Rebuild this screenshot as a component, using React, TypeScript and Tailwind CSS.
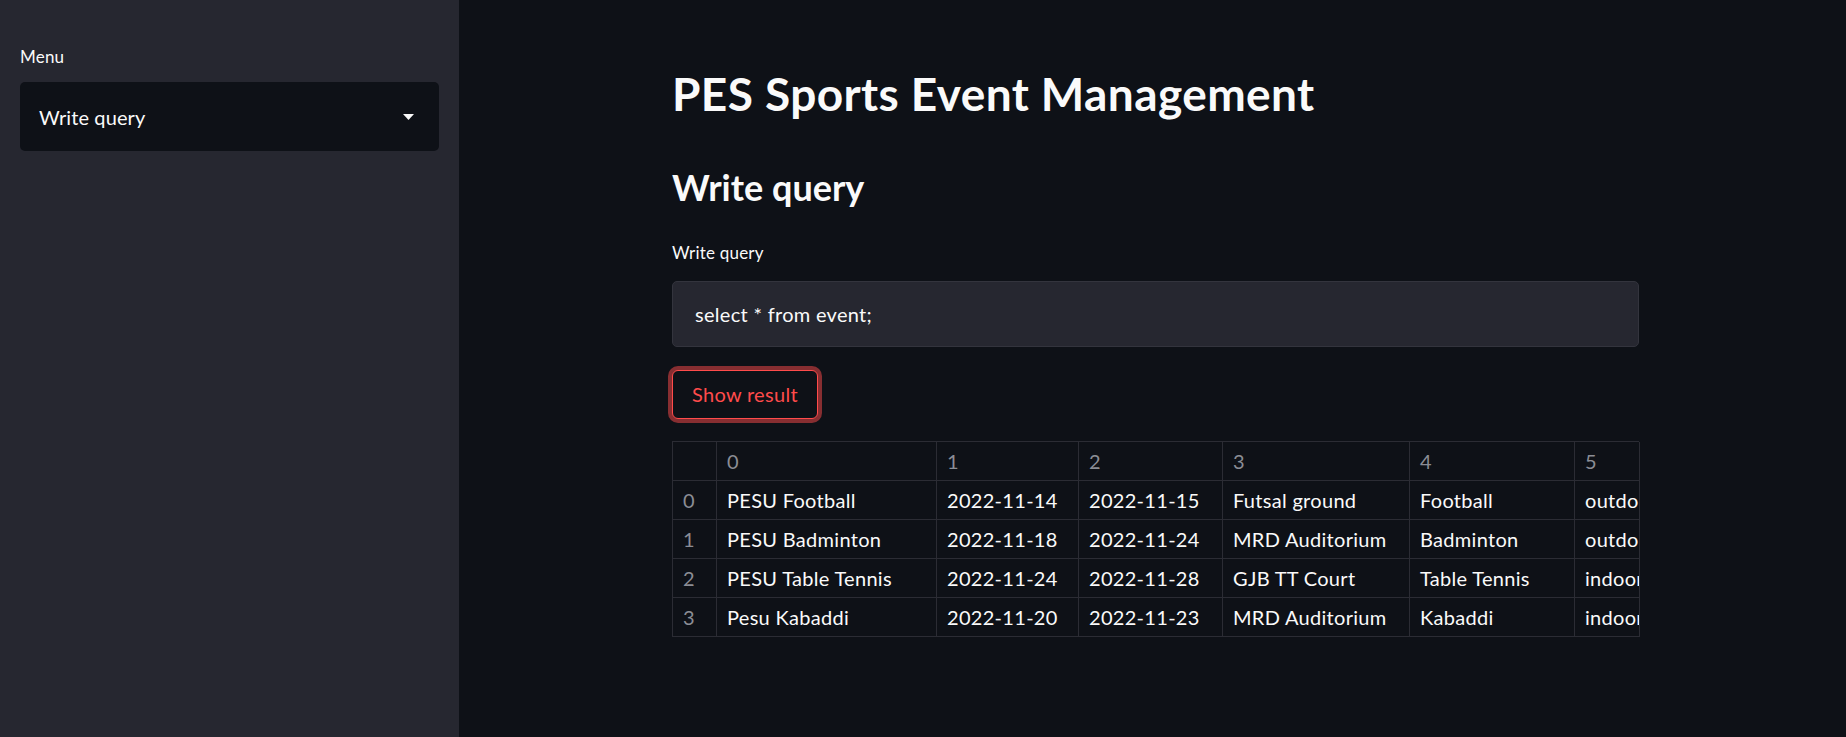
const rows = [
  ["PESU Football", "2022-11-14", "2022-11-15", "Futsal ground", "Football", "outdoor"],
  ["PESU Badminton", "2022-11-18", "2022-11-24", "MRD Auditorium", "Badminton", "outdoor"],
  ["PESU Table Tennis", "2022-11-24", "2022-11-28", "GJB TT Court", "Table Tennis", "indoor"],
  ["Pesu Kabaddi", "2022-11-20", "2022-11-23", "MRD Auditorium", "Kabaddi", "indoor"],
];

const cell = "border-r border-b border-[#2b2c34] px-[10px] h-[39px] flex items-center whitespace-nowrap overflow-hidden";

export default function App() {
  return (
    <div className="flex min-h-screen bg-[#0e1117] font-[Lato,sans-serif] text-[#fafafa]">
      <aside className="w-[459px] shrink-0 bg-[#262730] px-[20px] pt-[47px]">
        <div className="text-[17px] leading-[20px] tracking-[0.2px]">Menu</div>
        <div className="mt-[15px] h-[69px] rounded-[5px] bg-[#0e1117] flex items-center justify-between pl-[19px] pr-[25px]">
          <span className="text-[20px] tracking-[0.1px]">Write query</span>
          <svg width="11" height="6" viewBox="0 0 11 6">
            <path d="M0 0 L11 0 L5.5 6 Z" fill="#fafafa" />
          </svg>
        </div>
      </aside>

      <main className="flex-1 pl-[213px] pt-[66px]">
        <div className="w-[967px]">
          <h1 className="text-[46px] leading-[1.2] font-bold tracking-[0.4px]">PES Sports Event Management</h1>
          <h2 className="mt-[45px] text-[36px] leading-[1.2] font-bold">Write query</h2>
          <div className="mt-[34px] text-[17px] leading-[1.2] tracking-[0.2px]">Write query</div>

          <div className="mt-[17px] h-[66px] rounded-[5px] bg-[#262730] border border-[#33343d] flex items-center px-[22px]">
            <span className="text-[20px] tracking-[0.3px]">select * from event;</span>
          </div>

          <button className="mt-[23px] h-[49px] px-[19px] rounded-[6px] border border-[#ff4b4b] ring-4 ring-[#ff4b4b]/50 text-[#ff4b4b] text-[20px] tracking-[0.3px] bg-[#0e1117]">
            Show result
          </button>

          <div className="mt-[22px] grid grid-cols-[44px_220px_142px_144px_187px_165px_65px] border-t border-l border-[#2b2c34] text-[20px] tracking-[0.3px]">
            <div className={cell}></div>
            {["0", "1", "2", "3", "4", "5"].map((h) => (
              <div key={h} className={`${cell} text-[#8b8d95]`}>{h}</div>
            ))}
            {rows.map((r, i) => (
              <>
                <div key={`i${i}`} className={`${cell} text-[#8b8d95]`}>{i}</div>
                {r.map((v, j) => (
                  <div key={`${i}-${j}`} className={cell}>{v}</div>
                ))}
              </>
            ))}
          </div>
        </div>
      </main>
    </div>
  );
}
